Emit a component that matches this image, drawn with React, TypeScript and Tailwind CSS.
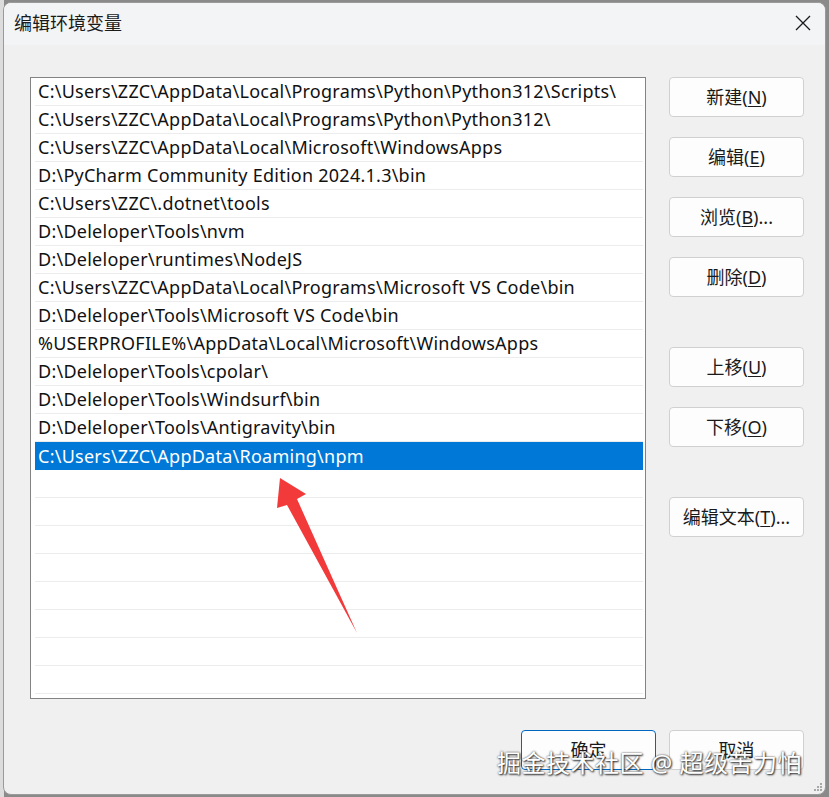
const paths = [
  "C:\\Users\\ZZC\\AppData\\Local\\Programs\\Python\\Python312\\Scripts\\",
  "C:\\Users\\ZZC\\AppData\\Local\\Programs\\Python\\Python312\\",
  "C:\\Users\\ZZC\\AppData\\Local\\Microsoft\\WindowsApps",
  "D:\\PyCharm Community Edition 2024.1.3\\bin",
  "C:\\Users\\ZZC\\.dotnet\\tools",
  "D:\\Deleloper\\Tools\\nvm",
  "D:\\Deleloper\\runtimes\\NodeJS",
  "C:\\Users\\ZZC\\AppData\\Local\\Programs\\Microsoft VS Code\\bin",
  "D:\\Deleloper\\Tools\\Microsoft VS Code\\bin",
  "%USERPROFILE%\\AppData\\Local\\Microsoft\\WindowsApps",
  "D:\\Deleloper\\Tools\\cpolar\\",
  "D:\\Deleloper\\Tools\\Windsurf\\bin",
  "D:\\Deleloper\\Tools\\Antigravity\\bin",
  "C:\\Users\\ZZC\\AppData\\Roaming\\npm",
];

const SELECTED = 13;
const EMPTY_ROWS = 9;

function WinButton({
  label,
  hotkey,
  suffix = "",
  primary = false,
  className = "",
}: {
  label: string;
  hotkey?: string;
  suffix?: string;
  primary?: boolean;
  className?: string;
}) {
  return (
    <button
      className={
        "h-[40px] w-[135px] rounded-[4px] bg-[#fdfdfd] text-[18px] text-[#1a1a1a] flex items-center justify-center " +
        (primary ? "border border-[#0067c0]" : "border border-[#d0d0d0]") +
        " " +
        className
      }
    >
      {label}
      {hotkey && (
        <>
          (<span className="underline underline-offset-2">{hotkey}</span>)
        </>
      )}
      {suffix}
    </button>
  );
}

export default function App() {
  return (
    <div
      className="relative w-[829px] h-[797px] bg-[#8a8a8a] overflow-hidden"
      style={{ fontFamily: '"Noto Sans", "Noto Sans CJK SC", sans-serif' }}
    >
      {/* background window sliver */}
      <div className="absolute left-0 top-0 w-[4px] h-full bg-[#dcdcdc]" />

      <div className="absolute left-[3px] top-[2px] w-[823px] h-[793px] rounded-[8px] bg-[#f0f0f0] border border-[#9a9a9a] overflow-hidden flex flex-col">
        {/* title bar */}
        <div className="h-[42px] shrink-0 flex items-center justify-between bg-[#f3f4f6] pl-[10px] pr-[14px]">
          <span className="text-[18px] text-[#1a1a1a] -mt-[2px]">编辑环境变量</span>
          <svg width="16" height="16" viewBox="0 0 16 16" className="-mt-[2px]">
            <path d="M1 1 L15 15 M15 1 L1 15" stroke="#1a1a1a" strokeWidth="1.3" />
          </svg>
        </div>

        {/* body */}
        <div className="flex pt-[32px] pl-[26px] pr-[21px]">
          <div className="w-[616px] h-[622px] bg-white border border-[#838383] overflow-hidden pl-[4px] pr-[2px]">
            {paths.map((p, i) => (
              <div
                key={i}
                className={
                  "h-[28px] flex items-center px-[3px] text-[18px] whitespace-nowrap tracking-[0.25px] " +
                  (i === SELECTED
                    ? "bg-[#0078d7] text-white"
                    : "text-[#111] border-b border-[#ececec]")
                }
              >
                {p}
              </div>
            ))}
            {Array.from({ length: EMPTY_ROWS }).map((_, i) => (
              <div key={"e" + i} className="h-[28px] border-b border-[#ececec]" />
            ))}
          </div>

          <div className="ml-[23px] flex flex-col">
            <WinButton label="新建" hotkey="N" />
            <WinButton label="编辑" hotkey="E" className="mt-[20px]" />
            <WinButton label="浏览" hotkey="B" suffix="..." className="mt-[20px]" />
            <WinButton label="删除" hotkey="D" className="mt-[20px]" />
            <WinButton label="上移" hotkey="U" className="mt-[50px]" />
            <WinButton label="下移" hotkey="O" className="mt-[20px]" />
            <WinButton label="编辑文本" hotkey="T" suffix="..." className="mt-[50px]" />
          </div>
        </div>

        {/* footer */}
        <div className="flex justify-end gap-[13px] pt-[31px] pr-[21px]">
          <WinButton label="确定" primary />
          <WinButton label="取消" />
        </div>

        {/* resize grip */}
        <svg width="10" height="10" viewBox="0 0 10 10" className="absolute right-[2px] bottom-[2px]">
          {[
            [8, 2],
            [5, 5],
            [8, 5],
            [2, 8],
            [5, 8],
            [8, 8],
          ].map(([x, y], i) => (
            <rect key={i} x={x - 1} y={y - 1} width="2" height="2" fill="#a8a8a8" />
          ))}
        </svg>
      </div>

      {/* red arrow annotation */}
      <svg className="absolute left-0 top-0 pointer-events-none" width="829" height="797">
        <polygon
          points="280,478 306,494 297,499 357,633 287,505 277,508"
          fill="#f23a3a"
        />
      </svg>

      {/* watermark */}
      <div className="absolute left-[497px] top-[745px] text-[24px] text-white tracking-[0.5px] whitespace-nowrap [text-shadow:0_0_2px_#444,1px_1px_2px_#222]">
        掘金技术社区 @ 超级苦力怕
      </div>
    </div>
  );
}
